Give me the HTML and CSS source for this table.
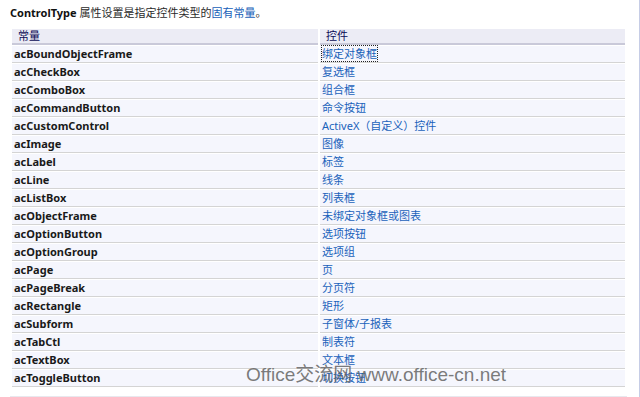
FILE: index.html
```html
<!DOCTYPE html>
<html lang="zh-CN">
<head>
<meta charset="utf-8">
<link rel="stylesheet" href="styles.css">
</head>
<body>
<div class="page">
  <div class="content">
    <p class="intro"><b>ControlType</b> 属性设置是指定控件类型的<a class="link" href="#">固有常量</a>。</p>
    <table class="consts">
      <thead>
        <tr><th class="c1">常量</th><th class="c2">控件</th></tr>
      </thead>
      <tbody>
        <tr><td class="name">acBoundObjectFrame</td><td class="desc"><a class="link focus" href="#">绑定对象框</a></td></tr>
        <tr><td class="name">acCheckBox</td><td class="desc">复选框</td></tr>
        <tr><td class="name">acComboBox</td><td class="desc">组合框</td></tr>
        <tr><td class="name">acCommandButton</td><td class="desc">命令按钮</td></tr>
        <tr><td class="name">acCustomControl</td><td class="desc">ActiveX（自定义）控件</td></tr>
        <tr><td class="name">acImage</td><td class="desc">图像</td></tr>
        <tr><td class="name">acLabel</td><td class="desc">标签</td></tr>
        <tr><td class="name">acLine</td><td class="desc">线条</td></tr>
        <tr><td class="name">acListBox</td><td class="desc">列表框</td></tr>
        <tr><td class="name">acObjectFrame</td><td class="desc">未绑定对象框或图表</td></tr>
        <tr><td class="name">acOptionButton</td><td class="desc">选项按钮</td></tr>
        <tr><td class="name">acOptionGroup</td><td class="desc">选项组</td></tr>
        <tr><td class="name">acPage</td><td class="desc">页</td></tr>
        <tr><td class="name">acPageBreak</td><td class="desc">分页符</td></tr>
        <tr><td class="name">acRectangle</td><td class="desc">矩形</td></tr>
        <tr><td class="name">acSubform</td><td class="desc">子窗体/子报表</td></tr>
        <tr><td class="name">acTabCtl</td><td class="desc">制表符</td></tr>
        <tr><td class="name">acTextBox</td><td class="desc">文本框</td></tr>
        <tr><td class="name">acToggleButton</td><td class="desc">切换按钮</td></tr>
      </tbody>
    </table>
    <div class="next"></div>
  </div>
  <div class="scrollbar"></div>
  <div class="watermark">Office交流网 www.office-cn.net</div>
</div>
</body>
</html>
```

FILE: styles.css
```css
html, body {
  margin: 0;
  padding: 0;
  background: #fff;
}
body {
  font-family: "Noto Sans", "Noto Sans CJK SC", sans-serif;
  font-size: 11px;
  color: #1e1e1e;
}
.page {
  position: relative;
  display: flex;
  width: 640px;
  height: 397px;
  overflow: hidden;
}
.content {
  flex: 1;
  padding: 0 12px 0 10px;
}
.intro {
  margin: 0;
  height: 28px;
  line-height: 25px;
  font-size: 11px;
  color: #2a2a2a;
}
.intro b {
  color: #111;
}
.link {
  color: #1760b8;
  text-decoration: none;
}
.consts {
  border-collapse: separate;
  border-spacing: 2px 1px;
  width: 617px;
  margin: 0;
  table-layout: fixed;
}
.consts th {
  background: #ececf5;
  font-weight: normal;
  text-align: left;
  color: #0a0a55;
  height: 14px;
  line-height: 14px;
  padding: 0 0 0 6px;
  border-bottom: 2px solid #c9c9d9;
}
.consts th.c1 {
  width: 300px;
}
.consts td {
  background: #f5f6fd;
  height: 16px;
  line-height: 16px;
  padding: 0 0 0 2px;
  border-bottom: 1px solid #d4d4d4;
  white-space: nowrap;
}
.consts td.name {
  font-weight: bold;
  color: #1a1a1a;
}
.consts td.desc {
  color: #1a62bb;
}
.focus {
  outline: 1px dotted #222;
}
.next {
  margin-top: 8px;
  height: 1px;
  background: #e8e8ee;
}
.scrollbar {
  width: 3px;
  background: #f0f0f0;
  border-left: 1px solid #c6cde6;
}
.watermark {
  position: absolute;
  left: 246px;
  top: 364px;
  font-family: "Liberation Sans", "Noto Sans CJK SC", sans-serif;
  font-size: 19px;
  line-height: 22px;
  color: rgba(100, 100, 100, 0.85);
  white-space: nowrap;
}
```
